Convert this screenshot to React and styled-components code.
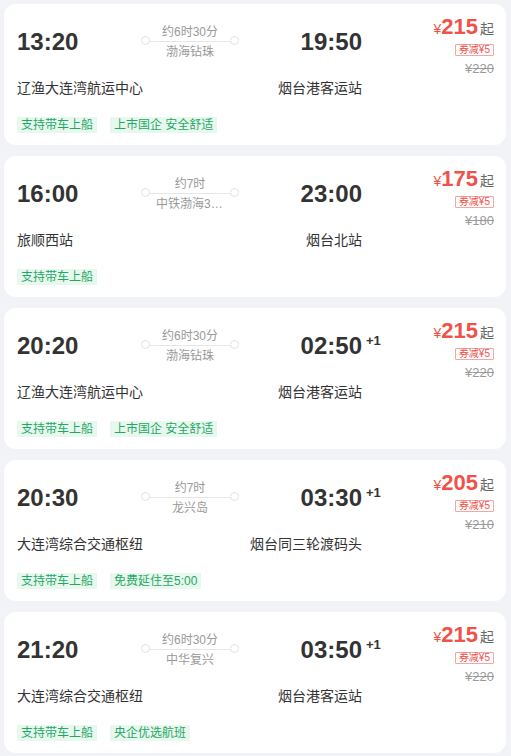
import React from 'react';
import styled, { createGlobalStyle } from 'styled-components';

const Global = createGlobalStyle`
  body {
    margin: 0;
    background: #f2f3f7;
    font-family: "Liberation Sans", "Noto Sans CJK SC", Arial, sans-serif;
    color: #333;
  }
`

const List = styled.div`
  padding: 4px 5px 4px 4px;
  display: flex;
  flex-direction: column;
  gap: 11px;
`

const Card = styled.div`
  background: #fff;
  border-radius: 12px;
  height: 141px;
  box-sizing: border-box;
  padding: 10px 12px 0 13px;
  display: flex;
  align-items: flex-start;
`

const Info = styled.div`
  display: grid;
  grid-template-columns: 125px 96px 124px;
  grid-template-rows: 36px auto auto;
  align-content: start;
  padding-top: 10px;
`

const Time = styled.div`
  font-size: 24px;
  font-weight: 700;
  line-height: 36px;
  color: #333;
  justify-self: ${p => (p.$right ? 'end' : 'start')};
  position: relative;
`

const Plus = styled.span`
  position: absolute;
  left: calc(100% + 4px);
  top: -5px;
  font-size: 13px;
  font-weight: 700;
`

const Middle = styled.div`
  display: flex;
  flex-direction: column;
  align-items: center;
`

const Small = styled.div`
  font-size: 12px;
  line-height: 16px;
  color: #999;
  max-width: 68px;
  white-space: nowrap;
  overflow: hidden;
  text-overflow: ellipsis;
`

const Connector = styled.div`
  width: 88px;
  height: 1px;
  background: #e6e6e6;
  margin: 1px 0 2px;
  position: relative;
  &::before,
  &::after {
    content: '';
    position: absolute;
    top: -5px;
    width: 9px;
    height: 9px;
    border-radius: 50%;
    border: 1px solid #e2e2e2;
    background: #fff;
    box-sizing: border-box;
  }
  &::before { left: -5px; }
  &::after { right: -5px; }
`

const Station = styled.div`
  font-size: 14px;
  line-height: 20px;
  margin-top: 18px;
  white-space: nowrap;
  grid-column: ${p => (p.$right ? '3' : '1 / span 2')};
  justify-self: ${p => (p.$right ? 'end' : 'start')};
`

const Tags = styled.div`
  grid-column: 1 / -1;
  display: flex;
  gap: 13px;
  margin-top: 19px;
`

const Tag = styled.span`
  font-size: 12px;
  line-height: 16px;
  padding: 0 4px;
  color: #1fa865;
  background: #e8f8ef;
  white-space: nowrap;
`

const PriceCol = styled.div`
  flex: 1;
  display: flex;
  flex-direction: column;
  align-items: flex-end;
`

const PriceRow = styled.div`
  line-height: 26px;
  white-space: nowrap;
`

const Yen = styled.span`
  font-size: 14px;
  color: #f0524a;
`

const Amount = styled.span`
  font-size: 22px;
  font-weight: 700;
  color: #f0524a;
`

const Qi = styled.span`
  font-size: 14px;
  color: #666;
  margin-left: 2px;
`

const Coupon = styled.div`
  margin-top: 2px;
  font-size: 10px;
  line-height: 10px;
  padding: 0 3px;
  color: #f0524a;
  border: 1px solid #f3a7a2;
  border-radius: 1px;
  white-space: nowrap;
`

const Origin = styled.div`
  margin-top: 5px;
  font-size: 13px;
  line-height: 16px;
  color: #999;
  text-decoration: line-through;
`

const trips = [
  { dep: '13:20', arr: '19:50', next: false, from: '辽渔大连湾航运中心', to: '烟台港客运站', dur: '约6时30分', ship: '渤海钻珠', price: 215, orig: 220, tags: ['支持带车上船', '上市国企 安全舒适'] },
  { dep: '16:00', arr: '23:00', next: false, from: '旅顺西站', to: '烟台北站', dur: '约7时', ship: '中铁渤海3号轮', price: 175, orig: 180, tags: ['支持带车上船'] },
  { dep: '20:20', arr: '02:50', next: true, from: '辽渔大连湾航运中心', to: '烟台港客运站', dur: '约6时30分', ship: '渤海钻珠', price: 215, orig: 220, tags: ['支持带车上船', '上市国企 安全舒适'] },
  { dep: '20:30', arr: '03:30', next: true, from: '大连湾综合交通枢纽', to: '烟台同三轮渡码头', dur: '约7时', ship: '龙兴岛', price: 205, orig: 210, tags: ['支持带车上船', '免费延住至5:00'] },
  { dep: '21:20', arr: '03:50', next: true, from: '大连湾综合交通枢纽', to: '烟台港客运站', dur: '约6时30分', ship: '中华复兴', price: 215, orig: 220, tags: ['支持带车上船', '央企优选航班'] },
];

const App = () => {
  return (
    <>
      <Global />
      <List>
        {trips.map((t, i) => (
          <Card key={i}>
            <Info>
              <Time>{t.dep}</Time>
              <Middle>
                <Small>{t.dur}</Small>
                <Connector />
                <Small>{t.ship}</Small>
              </Middle>
              <Time $right>
                {t.arr}
                {t.next && <Plus>+1</Plus>}
              </Time>
              <Station>{t.from}</Station>
              <Station $right>{t.to}</Station>
              <Tags>
                {t.tags.map(tag => (
                  <Tag key={tag}>{tag}</Tag>
                ))}
              </Tags>
            </Info>
            <PriceCol>
              <PriceRow>
                <Yen>¥</Yen>
                <Amount>{t.price}</Amount>
                <Qi>起</Qi>
              </PriceRow>
              <Coupon>券减¥5</Coupon>
              <Origin>¥{t.orig}</Origin>
            </PriceCol>
          </Card>
        ))}
      </List>
    </>
  );
};

export default App;
